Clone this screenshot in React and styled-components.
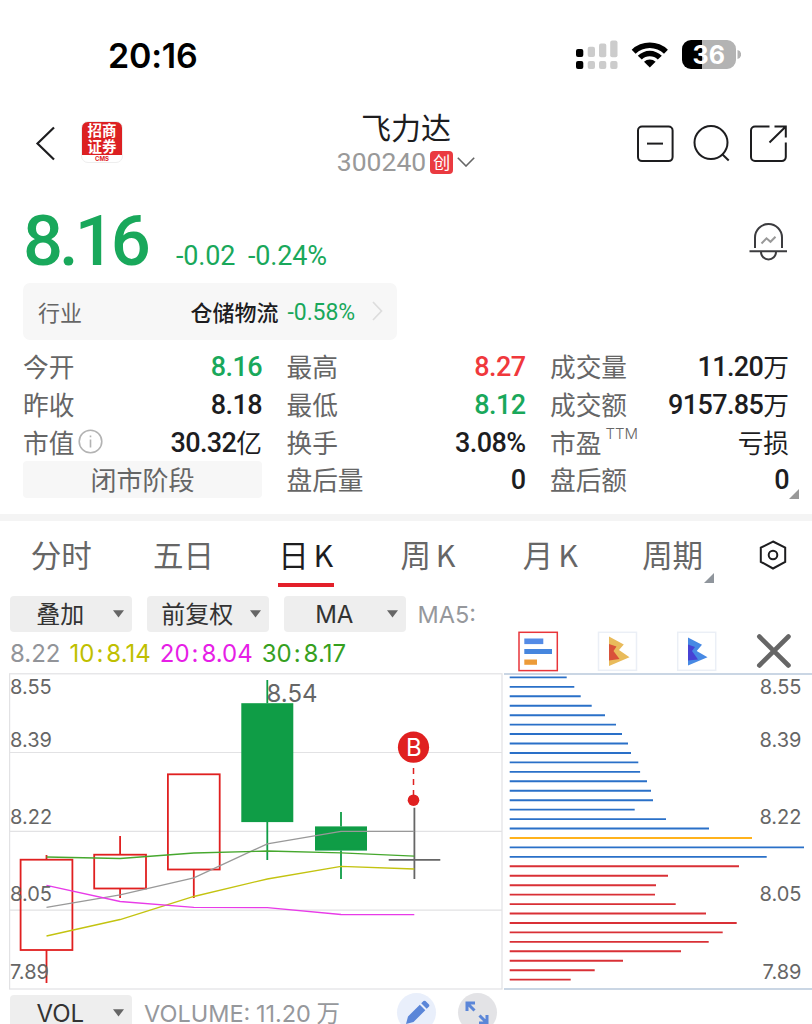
import React from "react"
import styled, {createGlobalStyle} from "styled-components"

const colors = {
	green: "#19a85b",
	red: "#f0383c",
	ink: "#1d1d1f",
	gray: "#666",
	pale: "#f7f7f7",
	pill: "#eee",
	axis: "#e2e2e4",
	candleUp: "#e02020",
	candleDown: "#0f9d46",
}

const fonts = {
	ui: `Inter, "Noto Sans CJK SC", sans-serif`,
	num: `Roboto, "Noto Sans CJK SC", sans-serif`,
	cjk: `"Noto Sans CJK SC", sans-serif`,
}

const quotes = [
	{label: "今开", value: "8.16", color: colors.green},
	{label: "最高", value: "8.27", color: colors.red},
	{label: "成交量", value: "11.20", unit: "万"},
	{label: "昨收", value: "8.18"},
	{label: "最低", value: "8.12", color: colors.green},
	{label: "成交额", value: "9157.85", unit: "万"},
	{label: "市值", value: "30.32", unit: "亿", info: true},
	{label: "换手", value: "3.08%"},
	{label: "市盈", sup: "TTM", unit: "亏损"},
	{phase: "闭市阶段"},
	{label: "盘后量", value: "0"},
	{label: "盘后额", value: "0"},
]

const tabs = ["分时", "五日", "日 K", "周 K", "月 K", "周期"]

const averages = [
	{value: "8.22", color: "#929499"},
	{days: "10", value: "8.14", color: "#bfbf00"},
	{days: "20", value: "8.04", color: "#e61ee6"},
	{days: "30", value: "8.17", color: "#36a01e"},
]

const axisLabels = [
	{y: 693.7, txt: "8.55"},
	{y: 746.7, txt: "8.39"},
	{y: 824, txt: "8.22"},
	{y: 901, txt: "8.05"},
	{y: 978.7, txt: "7.89"},
]

const candles = [
	{x: 46.5, top: 859.7, bottom: 950, high: 855, low: 983, up: true},
	{x: 120.1, top: 854.7, bottom: 888.5, high: 836, low: 898, up: true},
	{x: 193.8, top: 774.3, bottom: 869.5, high: 774, low: 898, up: true},
	{x: 267.3, top: 703.3, bottom: 822, high: 680, low: 860},
	{x: 341, top: 826.5, bottom: 850.5, high: 812, low: 879},
]

const lineX = [46.5, 120.1, 193.8, 267.3, 341, 414.3]
const maLines = [
	{color: "#999", y: [907.3, 894.8, 877.8, 843.8, 831.4, 831.4]},
	{color: "#c3c310", y: [936, 919.5, 896.5, 879, 866.4, 869]},
	{color: "#e83be8", y: [885.3, 901.5, 907.4, 907.7, 914.5, 914.7]},
	{color: "#46a82e", y: [857, 858.5, 853, 851, 852.8, 856.2]},
]

// length of each price level, top to bottom
const levels = [
	57, 64.6, 71, 82, 95.3, 106.3, 112.3, 118.3, 121.3, 128.6, 130.4,
	137.3, 141.3, 143.3, 125, 156.3, 199.3, 242.3, 294.3, 257, 229.3, 158.3,
	146.3, 145.3, 166, 196.3, 227, 213, 199, 171.3, 113.3, 85, 61,
]

const levelColor = (i) => {
	if (i === 17) return "#ffb21c"
	return i < 20 ? "#2a70c8" : "#d93036"
}

const StatusIcons = () => (
	<svg width="166" height="32" viewBox="575 39 166 32">
		{[576, 587.7, 599, 610.2].map((x, i) => (
			<g key={x} fill={i ? "#ccc" : "#000"}>
				<rect x={x} y={[49, 46.7, 43.5, 40.5][i]} width="7.3" height={[8, 10.3, 13.7, 16.7][i]} rx="2"/>
				<rect x={x} y="61" width="7.3" height="8" rx="2"/>
			</g>
		))}
		<path d="M631.7 49.8 A26 26 0 0 1 667.9 49.8 L664 53.7 A20.3 20.3 0 0 0 635.6 53.7 Z"/>
		<path d="M637.8 55.8 A17 17 0 0 1 661.8 55.8 L657.8 59.5 A11.5 11.5 0 0 0 641.8 59.5 Z"/>
		<path d="M644 61.8 A8.5 8.5 0 0 1 655.6 61.8 L649.8 67.6 Z"/>
		<path d="M691 40 H702 V69 H691 A9 9 0 0 1 682 60 V49 A9 9 0 0 1 691 40 Z"/>
		<path fill="#b3b3b3" d="M702 40 H727 A9 9 0 0 1 736 49 V60 A9 9 0 0 1 727 69 H702 Z M737.5 50 A4.6 4.6 0 0 1 737.5 59 Z"/>
		<text x="708.8" y="63.6" textAnchor="middle" fill="#fff" fontFamily="Inter, sans-serif" fontWeight="700" fontSize="25">36</text>
	</svg>
)

const BackIcon = () => (
	<svg width="20" height="36" viewBox="35 125 20 36" fill="none" stroke="#1d1d1f" strokeWidth="2.2">
		<path d="M54 127.5 L37.5 143.5 L54 159.5"/>
	</svg>
)

const HeaderIcons = () => (
	<svg width="154" height="42" viewBox="635 122 154 42" fill="none" stroke="#1d1d1f" strokeWidth="2">
		<rect x="638" y="126.5" width="34.6" height="34.6" rx="4"/>
		<path d="M647 143.6 H663"/>
		<circle cx="711" cy="142.6" r="16.5"/>
		<path d="M722 154 L728.7 160.5"/>
		<path d="M769.5 126.5 H755 A4 4 0 0 0 751 130.5 V157 A4 4 0 0 0 755 161 H781.5 A4 4 0 0 0 785.8 157 V142.5"/>
		<path d="M774.5 126.5 H785.8 V137.5 M785.8 126.5 L769.5 142.5"/>
	</svg>
)

const BellIcon = () => (
	<svg width="38" height="40" viewBox="749 222 38 40" fill="none" stroke="#3c3c3f" strokeWidth="2">
		<path d="M755 248 V237.5 A13.5 13.5 0 0 1 782 237.5 V248"/>
		<path d="M749.5 251.3 H787"/>
		<path d="M761 252 A7.5 7.5 0 0 0 776 252"/>
		<path stroke="#999" d="M761.5 243.5 L766.5 238.3 L770.5 241.8 L775.5 236.8"/>
	</svg>
)

const ToolIcons = () => (
	<svg width="276" height="42" viewBox="518 631 276 42">
		<g fill="#fff" strokeWidth="1.5">
			<rect x="519" y="632.3" width="38.3" height="38.3" stroke="#e8353a"/>
			<rect x="598.5" y="632.3" width="38" height="38" stroke="#ebeff6"/>
			<rect x="677.7" y="632.3" width="38" height="38" stroke="#ebeff6"/>
		</g>
		<path fill="#548be6" d="M524.3 638.5 h19 v5.6 h-19 Z"/>
		<path fill="#4686de" d="M524.3 649 h27.7 v5 h-27.7 Z"/>
		<path fill="#ec9b38" d="M524.3 659.5 h12.7 v5.3 h-12.7 Z"/>
		<path fill="#e9bb5b" d="M609 636.5 L623.8 644.5 L619 650 L629.5 657.3 L609 666 Z"/>
		<path fill="#d9523a" d="M609 644 L616.5 646.5 L613.5 651 L619.5 659 L609 660.5 Z"/>
		<path fill="#4789e4" d="M688 637.5 L702 644.8 L696.7 651 L707.5 657.3 L688 665.5 Z"/>
		<path fill="#4742d4" d="M688 644.5 L695 647 L692 651 L698 659.5 L688 660.5 Z"/>
		<path stroke="#666" strokeWidth="4.6" strokeLinecap="round" d="M759.3 636.5 L788.5 665.5 M788.5 636.5 L759.3 665.5"/>
	</svg>
)

const Caret = () => (
	<svg width="11" height="8" viewBox="0 0 11 8">
		<path d="M0 0.3 H11 L5.5 7.5 Z" fill="#666"/>
	</svg>
)

const CandleChart = () => (
	<svg width="503" height="318" viewBox="0 673 503 318">
		<g stroke={colors.axis} strokeWidth="1.2" fill="none">
			<rect x="9.6" y="673.8" width="492.4" height="315.2"/>
			<path d="M9.6 752.5 H502 M9.6 831.3 H502 M9.6 910.2 H502"/>
		</g>
		{candles.map(c => {
			const fill = c.up ? "none" : colors.candleDown
			return (
				<g key={c.x} stroke={c.up ? colors.candleUp : colors.candleDown} strokeWidth="1.8">
					<path d={`M${c.x} ${c.high} V${c.top} M${c.x} ${c.bottom} V${c.low}`}/>
					<rect x={c.x - (c.up ? 25.9 : 25.1)} y={c.up ? c.top : c.top + 0.8} width={c.up ? 51.8 : 50.2} height={c.bottom - c.top - (c.up ? 0 : 1.6)} fill={fill}/>
				</g>
			)
		})}
		<path stroke="#666" strokeWidth="1.8" d="M414.4 807.7 V879 M388.7 859.8 H440.3"/>
		{maLines.map(l => (
			<polyline key={l.color} fill="none" stroke={l.color} strokeWidth="1.3" points={l.y.map((y, i) => `${lineX[i]},${y}`).join(" ")}/>
		))}
		<AxisText>
			{axisLabels.map(l => <text key={l.txt} x="10" y={l.y}>{l.txt}</text>)}
			<PeakText x="266.5" y="701.7">8.54</PeakText>
		</AxisText>
		<path stroke={colors.candleUp} strokeWidth="1.5" strokeDasharray="6 5" d="M413.5 768 V798"/>
		<g fill={colors.candleUp}>
			<circle cx="413.5" cy="747.2" r="15.6"/>
			<circle cx="413.5" cy="800.2" r="5.8"/>
		</g>
		<text x="413.9" y="756.2" textAnchor="middle" fill="#fff" fontFamily="Inter, sans-serif" fontSize="24">B</text>
	</svg>
)

const LevelChart = () => (
	<svg width="309" height="318" viewBox="503 673 309 318">
		<path stroke="#b9c9dc" strokeWidth="1.7" d="M504 674 H812 M504 989 H812"/>
		{levels.map((len, i) => (
			<path key={i} stroke={levelColor(i)} strokeWidth="1.9" d={`M509.7 ${677.4 + i * 9.445} h${len}`}/>
		))}
		<AxisText textAnchor="end">
			{axisLabels.map(l => <text key={l.txt} x="801.5" y={l.y}>{l.txt}</text>)}
		</AxisText>
	</svg>
)

const Quote = ({item}) => {
	if (item.phase) return <Phase>{item.phase}</Phase>
	return (
		<Cell>
			<Label>
				{item.label}
				{item.sup && <Sup>{item.sup}</Sup>}
				{item.info &&
					<svg width="25" height="25" viewBox="0 0 25 25" fill="none" stroke="#b3b3b3" strokeWidth="1.6">
						<circle cx="12.5" cy="12.5" r="11.3"/>
						<path d="M12.5 10.5 V18.5 M12.5 6.5 V8.3"/>
					</svg>
				}
			</Label>
			<Value color={item.color}>
				{item.value}
				{item.unit && <Unit>{item.unit}</Unit>}
			</Value>
		</Cell>
	)
}

const App = () => (
	<Screen>
		<GlobalStyle/>
		<StatusBar>
			<Clock>20:16</Clock>
			<StatusIcons/>
		</StatusBar>

		<Header>
			<HeaderSide>
				<BackIcon/>
				<Broker>
					<span>招商</span>
					<span>证券</span>
					<em>CMS</em>
				</Broker>
			</HeaderSide>
			<StockName>
				<h1>飞力达</h1>
				<Code>
					300240
					<Board>创</Board>
					<svg width="18" height="10" viewBox="0 0 18 10" fill="none" stroke="#666" strokeWidth="1.6">
						<path d="M0.8 0.8 L9 9 L17.2 0.8"/>
					</svg>
				</Code>
			</StockName>
			<HeaderSide $right>
				<HeaderIcons/>
			</HeaderSide>
		</Header>

		<PriceRow>
			<Price>8.16</Price>
			<Change>-0.02</Change>
			<Change>-0.24%</Change>
			<BellIcon/>
		</PriceRow>

		<Industry>
			<span>行业</span>
			<b>仓储物流</b>
			<i>-0.58%</i>
			<svg width="11" height="20" viewBox="0 0 11 20" fill="none" stroke="#ddd" strokeWidth="1.7">
				<path d="M1 1 L9.5 10 L1 19"/>
			</svg>
		</Industry>

		<Quotes>
			{quotes.map(q => <Quote key={q.label || q.phase} item={q}/>)}
			<Corner color="#999"/>
		</Quotes>

		<Tabs>
			{tabs.map(t => (
				<Tab key={t} $active={t === "日 K"}>
					{t}
					{t === "周期" && <TabCorner color="#8f959c"/>}
				</Tab>
			))}
			<svg width="28" height="30" viewBox="0 0 28 30" fill="none" stroke="#1d1d1f" strokeWidth="2">
				<path d="M14 1.5 L26.2 7.7 V21.8 L14 28.5 L1.8 21.8 V7.7 Z"/>
				<circle cx="14" cy="15" r="4.3"/>
			</svg>
		</Tabs>

		<Controls>
			<Pill><span>叠加</span><Caret/></Pill>
			<Pill><span>前复权</span><Caret/></Pill>
			<Pill><span>MA</span><Caret/></Pill>
			<Muted>MA5:</Muted>
		</Controls>

		<Averages>
			{averages.map(a => (
				<Average key={a.value} color={a.color}>
					{a.days}{a.days && <Colon>:</Colon>}{a.value}
				</Average>
			))}
			<ToolIcons/>
		</Averages>

		<Charts>
			<CandleChart/>
			<LevelChart/>
		</Charts>

		<Volume>
			<Pill><span>VOL</span><Caret/></Pill>
			<Muted>VOLUME: 11.20 万</Muted>
			<Round color="#e9effb">
				<svg width="26" height="26" viewBox="0 0 26 26" fill="#5b86d8">
					<path d="M2 24 L4 16.5 L15.8 4.7 L21.3 10.2 L9.5 22 Z M17.2 3.3 L19.5 1 Q20.5 0.3 21.5 1 L25 4.5 Q25.7 5.5 25 6.5 L22.7 8.8 Z"/>
				</svg>
			</Round>
			<Round color="#e3e3e6">
				<svg width="24" height="24" viewBox="0 0 24 24" fill="none" stroke="#5b86d8" strokeWidth="3">
					<path d="M2 10 V2 H10 M2.5 2.5 L9.5 9.5 M22 14 V22 H14 M21.5 21.5 L14.5 14.5"/>
				</svg>
			</Round>
		</Volume>
	</Screen>
)

export default App

const GlobalStyle = createGlobalStyle`
	* {
		box-sizing: border-box;
	}
	body {
		margin: 0;
		background: #fff;
	}
	h1 {
		margin: 0;
	}
	svg {
		display: block;
		flex-shrink: 0;
	}
`

const Screen = styled.main`
	width: 812px;
	height: 1024px;
	overflow: hidden;
	background: #fff;
	color: ${colors.ink};
	font-family: ${fonts.ui};
	white-space: nowrap;
`

const StatusBar = styled.div`
	display: flex;
	justify-content: space-between;
	height: 102px;
	padding: 39px 71px 0 108px;
`

const Clock = styled.div`
	color: #000;
	font-size: 34px;
	font-weight: 600;
	line-height: 33px;
	letter-spacing: -0.2px;
`

const Header = styled.header`
	display: grid;
	grid-template-columns: 1fr auto 1fr;
	height: 98px;
	padding: 0 23px;
`

const HeaderSide = styled.div`
	display: flex;
	gap: 26px;
	justify-content: ${props => props.$right ? "flex-end" : "flex-start"};
	padding-top: ${props => props.$right ? "20px" : "19px"};
	padding-left: ${props => props.$right ? 0 : "12px"};
	& > svg:first-child {
		margin-top: ${props => props.$right ? 0 : "4px"};
	}
`

const Broker = styled.div`
	display: flex;
	flex-direction: column;
	align-items: center;
	width: 42px;
	height: 42px;
	border: 1px solid #eee;
	border-radius: 7px;
	background: linear-gradient(#dc2022 33.5px, #fff 33.5px);
	color: #fff;
	font: 700 14.5px/16px ${fonts.cjk};
	& em {
		margin-top: 1px;
		color: #dc2022;
		font: 700 6px/8px ${fonts.ui};
	}
`

const StockName = styled.div`
	display: flex;
	flex-direction: column;
	align-items: center;
	& h1 {
		font: 400 30px/48px ${fonts.cjk};
	}
`

const Code = styled.div`
	display: flex;
	align-items: center;
	gap: 4px;
	color: #999;
	font: 400 26.5px/24px ${fonts.num};
`

const Board = styled.span`
	width: 23px;
	height: 23px;
	border-radius: 4px;
	background: #ea3a40;
	color: #fff;
	font: 400 17px/22px ${fonts.cjk};
	text-align: center;
`

const PriceRow = styled.div`
	display: flex;
	height: 83px;
	padding: 0 25px 0 23px;
	color: ${colors.green};
	& > svg {
		margin: 22px 0 0 auto;
	}
`

const Price = styled.div`
	width: 153px;
	font: 500 70.5px/82px ${fonts.num};
	letter-spacing: -4px;
`

const Change = styled.div`
	margin-right: 13px;
	padding-top: 41px;
	font: 400 27px/30px ${fonts.num};
	letter-spacing: -0.2px;
`

const Industry = styled.div`
	display: flex;
	align-items: center;
	width: 374px;
	height: 57px;
	margin-left: 23px;
	padding: 0 14px 2px 15px;
	border-radius: 7px;
	background: ${colors.pale};
	font: 400 22px/30px ${fonts.cjk};
	& span {
		margin-right: auto;
		color: ${colors.gray};
	}
	& b {
		font-weight: 500;
	}
	& i {
		margin: 4px 17px 0 9px;
		color: ${colors.green};
		font: 400 23px/30px ${fonts.num};
		letter-spacing: -0.1px;
	}
`

const Quotes = styled.section`
	position: relative;
	display: grid;
	grid-template-columns: repeat(3, 239px);
	grid-auto-rows: 37.8px;
	column-gap: 24.5px;
	height: 181px;
	padding: 8px 23px 0;
	border-bottom: 7px solid #f4f4f4;
`

const Cell = styled.div`
	display: flex;
	justify-content: space-between;
	align-items: center;
	height: 36px;
`

const Label = styled.span`
	display: flex;
	align-items: center;
	gap: 4px;
	color: ${colors.gray};
	font: 400 25.7px/36px ${fonts.cjk};
`

const Sup = styled.sup`
	font: 300 15px/17px ${fonts.ui};
	margin-top: -16px;
`

const Value = styled.span`
	display: flex;
	align-items: center;
	color: ${props => props.color || colors.ink};
	font: 500 27px/36px ${fonts.num};
	letter-spacing: -0.6px;
	padding-top: 2px;
`

const Unit = styled.span`
	margin-top: -2px;
	font: 400 25.7px/36px ${fonts.cjk};
	letter-spacing: 0;
`

const Phase = styled.div`
	height: 37px;
	border-radius: 4px;
	background: ${colors.pale};
	color: ${colors.gray};
	font: 400 26px/36px ${fonts.cjk};
	text-align: center;
`

const Corner = styled.i`
	position: absolute;
	right: 13px;
	bottom: 15px;
	border-left: 10px solid transparent;
	border-bottom: 10px solid ${props => props.color};
`

const Tabs = styled.nav`
	display: grid;
	grid-template-columns: repeat(6, 122.3px) 78px;
	height: 75px;
	justify-items: center;
	& > svg {
		margin-top: 19px;
	}
`

const Tab = styled.div`
	position: relative;
	min-width: 56px;
	height: 66px;
	color: ${props => props.$active ? colors.ink : colors.gray};
	font: 400 30.5px/67px ${fonts.cjk};
	word-spacing: -2px;
	text-align: center;
	border-bottom: 4px solid ${props => props.$active ? "#e3202a" : "transparent"};
`

const TabCorner = styled(Corner)`
	right: -11px;
	bottom: 0;
`

const Controls = styled.div`
	display: flex;
	gap: 14.5px;
	height: 36px;
	padding-left: 9.5px;
`

const Pill = styled.div`
	display: flex;
	align-items: center;
	width: 122.5px;
	height: 36px;
	padding-right: 8px;
	border-radius: 4px;
	background: ${colors.pill};
	color: #333;
	font: 400 24px/36px ${fonts.ui};
	flex-shrink: 0;
	& span {
		flex: 1;
		padding: 1px 2px 0 0;
		text-align: center;
	}
`

const Muted = styled.span`
	margin-left: -3px;
	color: #96989c;
	font-size: 23.5px;
	line-height: 37px;
`

const Averages = styled.div`
	display: flex;
	height: 41px;
	padding-left: 10px;
	& > svg {
		margin: -1px 18px 0 auto;
	}
`

const Average = styled.span`
	margin-right: 9px;
	color: ${props => props.color};
	font-size: 24px;
	line-height: 43px;
`

const Colon = styled.span`
	margin: 0 3px 0 2px;
`

const Charts = styled.section`
	display: flex;
`

const AxisText = styled.g`
	fill: #666;
	font-family: ${fonts.ui};
	font-size: 20px;
`

const PeakText = styled.text`
	font-size: 24px;
`

const Volume = styled.div`
	display: flex;
	padding: 4px 0 0 9.5px;
	& ${Muted} {
		width: 268px;
		padding-left: 15px;
		font-size: 23.5px;
		word-spacing: -1px;
		flex-shrink: 0;
	}
`

const Round = styled.div`
	display: flex;
	align-items: center;
	justify-content: center;
	width: 39px;
	height: 39px;
	margin: -2px 21.5px 0 0;
	border-radius: 50%;
	background: ${props => props.color};
	flex-shrink: 0;
`
